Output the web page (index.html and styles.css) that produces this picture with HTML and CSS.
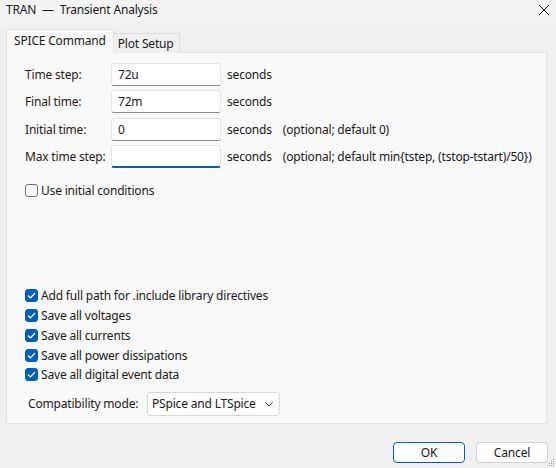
FILE: index.html
```html
<!DOCTYPE html>
<html>
<head>
<meta charset="utf-8">
<link rel="stylesheet" href="styles.css">
</head>
<body>
<div class="window">
  <div class="titlebar">
    <span class="title">TRAN &nbsp;—&nbsp; Transient Analysis</span>
    <svg class="close" width="12" height="12" viewBox="0 0 12 12"><path d="M1 1 L11 11 M11 1 L1 11" stroke="#1a1a1a" stroke-width="1" fill="none"/></svg>
  </div>
  <div class="tabs">
    <div class="tab active">SPICE Command</div>
    <div class="tab">Plot Setup</div>
  </div>
  <div class="panel">
    <div class="fields">
      <div class="row"><span class="label">Time step:</span><span class="input">72u</span><span class="unit">seconds</span></div>
      <div class="row"><span class="label">Final time:</span><span class="input">72m</span><span class="unit">seconds</span></div>
      <div class="row"><span class="label">Initial time:</span><span class="input">0</span><span class="unit">seconds</span><span class="note">(optional; default 0)</span></div>
      <div class="row"><span class="label">Max time step:</span><span class="input focus"></span><span class="unit">seconds</span><span class="note">(optional; default min{tstep, (tstop-tstart)/50})</span></div>
    </div>
    <div class="check single"><span class="box"></span>Use initial conditions</div>
    <div class="checks">
      <div class="check"><span class="box on"><svg width="9" height="7" viewBox="0 0 9 7"><path d="M1 3.5 L3.5 6 L8 1" stroke="#fff" stroke-width="1.2" fill="none"/></svg></span>Add full path for .include library directives</div>
      <div class="check"><span class="box on"><svg width="9" height="7" viewBox="0 0 9 7"><path d="M1 3.5 L3.5 6 L8 1" stroke="#fff" stroke-width="1.2" fill="none"/></svg></span>Save all voltages</div>
      <div class="check"><span class="box on"><svg width="9" height="7" viewBox="0 0 9 7"><path d="M1 3.5 L3.5 6 L8 1" stroke="#fff" stroke-width="1.2" fill="none"/></svg></span>Save all currents</div>
      <div class="check"><span class="box on"><svg width="9" height="7" viewBox="0 0 9 7"><path d="M1 3.5 L3.5 6 L8 1" stroke="#fff" stroke-width="1.2" fill="none"/></svg></span>Save all power dissipations</div>
      <div class="check"><span class="box on"><svg width="9" height="7" viewBox="0 0 9 7"><path d="M1 3.5 L3.5 6 L8 1" stroke="#fff" stroke-width="1.2" fill="none"/></svg></span>Save all digital event data</div>
    </div>
    <div class="compat">
      <span class="clabel">Compatibility mode:</span>
      <span class="select">PSpice and LTSpice<svg width="10" height="6" viewBox="0 0 10 6"><path d="M1 1 L5 5 L9 1" stroke="#555" stroke-width="1" fill="none"/></svg></span>
    </div>
  </div>
  <div class="buttons">
    <span class="btn default">OK</span>
    <span class="btn">Cancel</span>
  </div>
  <svg class="grip" width="8" height="8" viewBox="0 0 8 8"><g fill="#a0a0a0"><rect x="6" y="0" width="1" height="1"/><rect x="4" y="2" width="1" height="1"/><rect x="6" y="2" width="1" height="1"/><rect x="2" y="4" width="1" height="1"/><rect x="4" y="4" width="1" height="1"/><rect x="6" y="4" width="1" height="1"/><rect x="0" y="6" width="1" height="1"/><rect x="2" y="6" width="1" height="1"/><rect x="4" y="6" width="1" height="1"/><rect x="6" y="6" width="1" height="1"/></g></svg>
</div>
</body>
</html>
```

FILE: styles.css
```css
html, body {
  margin: 0;
  padding: 0;
}
body {
  width: 556px;
  height: 468px;
  overflow: hidden;
  background: #f0f0f0;
  font-family: "Noto Sans", "Open Sans", sans-serif;
  font-size: 12px;
  letter-spacing: -0.18px;
  color: #1a1a1a;
}
.window {
  position: relative;
  width: 556px;
  height: 468px;
}
.titlebar {
  height: 25px;
  background: #f3f3f3;
  display: flex;
  align-items: flex-start;
  justify-content: space-between;
  padding: 0 6px;
  box-sizing: border-box;
}
.title {
  line-height: 20px;
}
.close {
  margin-top: 4px;
  margin-right: 0px;
}
.tabs {
  display: flex;
  align-items: flex-end;
  margin: 4px 0 0 6px;
  height: 24px;
  position: relative;
  z-index: 1;
}
.tab {
  border: 1px solid #dcdcdc;
  border-bottom: none;
  background: #f0f0f0;
  height: 20px;
  line-height: 19px;
  padding: 0 5px 0 4px;
  box-sizing: border-box;
}
.tab.active {
  background: #f9f9f9;
  height: 24px;
  line-height: 22px;
  padding: 0 7px 0 7px;
  border-color: #e3e3e3;
}
.tab + .tab {
  border-left: none;
}
.panel {
  margin: -1px 9px 0 6px;
  height: 372px;
  box-sizing: border-box;
  background: #f9f9f9;
  border: 1px solid #e3e3e3;
  padding: 10px 0 0 18px;
  display: flex;
  flex-direction: column;
}
.fields {
  display: flex;
  flex-direction: column;
  gap: 4.3px;
}
.row {
  display: flex;
  align-items: center;
  height: 23px;
}
.label {
  width: 86px;
  color: #2a1a1a;
}
.input {
  width: 110px;
  height: 23px;
  box-sizing: border-box;
  background: #fff;
  border: 1px solid #e5e5e5;
  border-bottom: 1px solid #8a8a8a;
  border-radius: 3px;
  padding-left: 6px;
  line-height: 21px;
}
.input.focus {
  border-bottom: 2px solid #005fb8;
}
.unit {
  margin-left: 6px;
}
.note {
  margin-left: 11px;
}
.check {
  display: flex;
  align-items: center;
  height: 19.75px;
}
.check.single {
  height: 20px;
  margin-top: 13px;
}
.box {
  width: 13px;
  height: 13px;
  box-sizing: border-box;
  border: 1px solid #6e6e6e;
  border-radius: 3px;
  background: #fdfdfd;
  margin-right: 3px;
  display: flex;
  align-items: center;
  justify-content: center;
}
.box.on {
  background: #005fb8;
  border-color: #005fb8;
}
.checks {
  margin-top: 85px;
  display: flex;
  flex-direction: column;
}
.compat {
  display: flex;
  align-items: center;
  margin-top: 7px;
  margin-left: 3px;
}
.clabel {
  width: 119px;
}
.select {
  width: 133px;
  height: 24px;
  box-sizing: border-box;
  background: #fff;
  border: 1px solid #d6d6d6;
  border-radius: 3px;
  padding: 0 5px 0 4px;
  display: flex;
  align-items: center;
  justify-content: space-between;
}
.buttons {
  display: flex;
  justify-content: flex-end;
  gap: 11px;
  margin-top: 18px;
  padding-right: 8px;
}
.btn {
  width: 72px;
  height: 21px;
  box-sizing: border-box;
  background: #fdfdfd;
  border: 1px solid #d0d0d0;
  border-radius: 4px;
  text-align: center;
  line-height: 19px;
}
.btn.default {
  border: 1px solid #005fb8;
}
.grip {
  position: absolute;
  right: 1px;
  bottom: 1px;
}
```
